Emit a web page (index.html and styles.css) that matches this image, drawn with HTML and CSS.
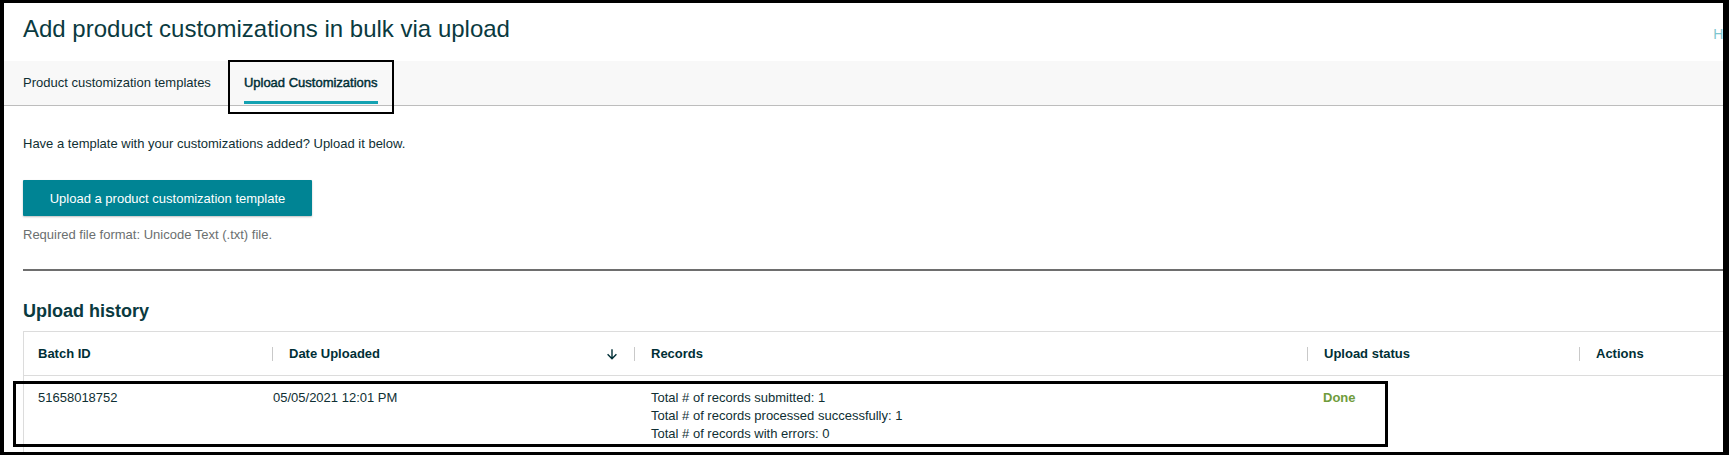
FILE: index.html
```html
<!DOCTYPE html>
<html lang="en">
<head>
<meta charset="utf-8">
<title>Add product customizations in bulk via upload</title>
<link rel="stylesheet" href="styles.css">
</head>
<body>
<div class="frame">
  <div class="page">
    <header class="page-head">
      <h1 class="title">Add product customizations in bulk via upload</h1>
      <a class="help">Help</a>
    </header>
    <nav class="tabs">
      <div class="tab first">Product customization templates</div>
      <div class="tab active">Upload Customizations<span class="mark mark-tab"></span></div>
    </nav>
    <section class="content">
      <p class="intro">Have a template with your customizations added? Upload it below.</p>
      <button class="btn">Upload a product customization template</button>
      <p class="hint">Required file format: Unicode Text (.txt) file.</p>
      <div class="divider"></div>
      <h2 class="subtitle">Upload history</h2>
      <div class="table">
        <div class="thead">
          <div class="th c1">Batch ID</div>
          <div class="th c2"><span class="sep"></span><span class="th-label">Date Uploaded</span>
            <svg class="sort" width="12" height="12" viewBox="0 0 12 12" aria-hidden="true"><path d="M6 1.2V10.6M1.6 6.3L6 10.7L10.4 6.3" fill="none" stroke="#002f36" stroke-width="1.4"/></svg>
          </div>
          <div class="th c3"><span class="sep"></span><span class="th-label">Records</span></div>
          <div class="th c4"><span class="sep"></span><span class="th-label">Upload status</span></div>
          <div class="th c5"><span class="sep"></span><span class="th-label">Actions</span></div>
        </div>
        <div class="tr">
          <div class="td c1">51658018752</div>
          <div class="td c2">05/05/2021 12:01 PM</div>
          <div class="td c3">
            <div>Total # of records submitted: 1</div>
            <div>Total # of records processed successfully: 1</div>
            <div>Total # of records with errors: 0</div>
          </div>
          <div class="td c4 status">Done</div>
          <div class="td c5"></div>
          <span class="mark mark-row"></span>
        </div>
      </div>
    </section>
  </div>
</div>
</body>
</html>
```

FILE: styles.css
```css
html, body {
  margin: 0;
  padding: 0;
  background: #000;
}

.frame {
  width: 1729px;
  height: 455px;
  box-sizing: border-box;
  border-style: solid;
  border-color: #000;
  border-width: 3px 6px 3px 4px;
  background: #fff;
  overflow: hidden;
}

.page {
  width: 1760px;
  font-family: "Liberation Sans", Arial, sans-serif;
  color: #002f36;
}

.page-head {
  display: flex;
  justify-content: space-between;
  align-items: baseline;
  height: 58px;
  box-sizing: border-box;
  padding: 12px 22px 0 19px;
}

.title {
  margin: 0;
  font-size: 24px;
  line-height: 28px;
  font-weight: normal;
  color: #0a3a40;
}

.help {
  font-size: 14px;
  color: #7ec6cf;
  position: relative;
  top: 2px;
}

.tabs {
  display: flex;
  align-items: flex-start;
  height: 44px;
  padding-left: 19px;
  background: #f8f8f8;
  border-bottom: 1px solid #bdbdbd;
}

.tab {
  position: relative;
  height: 43px;
  box-sizing: border-box;
  padding-top: 14px;
  font-size: 13px;
  line-height: 16px;
  color: #0f2f33;
}

.tab.first {
  margin-right: 33px;
}

.tab.active {
  color: #002f36;
  -webkit-text-stroke: 0.45px #002f36;
  border-bottom: 3px solid #14a2b2;
}

.mark {
  position: absolute;
  box-sizing: border-box;
  border: 2px solid #000;
  pointer-events: none;
}

.mark-tab {
  left: -16px;
  top: -1px;
  width: 166px;
  height: 54px;
}

.content {
  padding: 30px 19px 0 19px;
}

.intro {
  margin: 0;
  font-size: 13px;
  line-height: 16px;
  color: #0f2f33;
}

.btn {
  display: block;
  margin-top: 28px;
  width: 289px;
  height: 36px;
  border: 0;
  border-radius: 1px;
  background: #008494;
  color: #fff;
  font-family: "Liberation Sans", Arial, sans-serif;
  font-size: 13px;
  box-shadow: 0 1px 2px rgba(0, 0, 0, 0.25);
  padding: 0;
}

.hint {
  margin: 11px 0 0;
  font-size: 13px;
  line-height: 16px;
  color: #6b6f70;
}

.divider {
  margin-top: 26px;
  height: 2px;
  background: #6e6e6e;
}

.subtitle {
  margin: 29px 0 0;
  font-size: 18px;
  line-height: 22px;
  font-weight: bold;
  color: #0a3a40;
}

.table {
  margin-top: 9px;
  border-left: 1px solid #dcdcdc;
  border-top: 1px solid #dcdcdc;
}

.thead,
.tr {
  display: grid;
  grid-template-columns: 248px 362px 673px 272px 1fr;
}

.thead {
  height: 44px;
  box-sizing: border-box;
  border-bottom: 1px solid #dcdcdc;
}

.th {
  display: flex;
  align-items: center;
  font-size: 13px;
  font-weight: bold;
  color: #002f36;
}

.th.c1 {
  padding-left: 14px;
}

.sep {
  width: 1px;
  height: 14px;
  background: #c9c9c9;
  margin-right: 16px;
}

.sort {
  margin-left: auto;
  margin-right: 16px;
}

.tr {
  position: relative;
  padding-top: 13px;
  height: 80px;
}

.td {
  font-size: 13px;
  line-height: 18px;
  color: #0f2f33;
}

.td.c1 {
  padding-left: 14px;
}

.td.c2 {
  padding-left: 1px;
}

.td.c3 {
  padding-left: 17px;
}

.td.c4 {
  padding-left: 16px;
}

.status {
  color: #6f9c3c;
  font-weight: bold;
}

.mark-row {
  left: -11px;
  top: 5px;
  width: 1375px;
  height: 66px;
  border-width: 3px;
}
```
